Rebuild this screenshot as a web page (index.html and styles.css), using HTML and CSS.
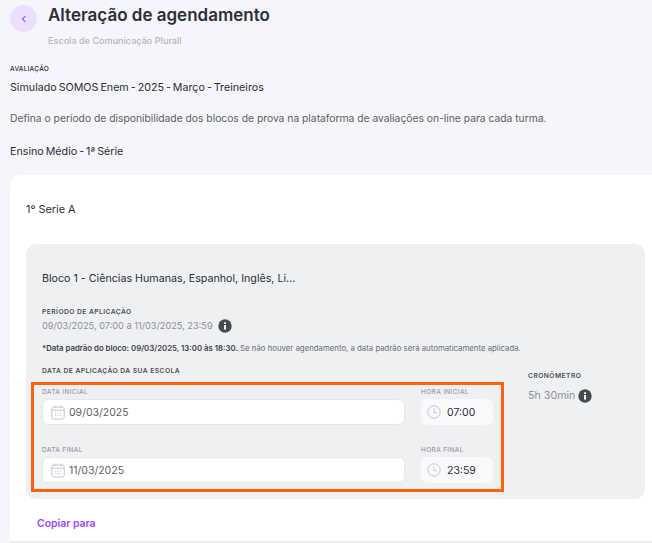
FILE: index.html
```html
<!DOCTYPE html>
<html lang="pt">
<head>
<meta charset="utf-8">
<title>Alteração de agendamento</title>
<link rel="stylesheet" href="styles.css">
</head>
<body>
<header class="top">
  <button class="back" aria-label="Voltar">
    <svg width="6" height="8" viewBox="0 0 6 8"><path d="M4.3 1 1.6 4l2.7 3" fill="none" stroke="#8b3ffc" stroke-width="1.1"/></svg>
  </button>
  <div>
    <h1 class="title">Alteração de agendamento</h1>
    <p class="school">Escola de Comunicação Plurall</p>
  </div>
</header>
<section class="intro">
  <div class="overline">AVALIAÇÃO</div>
  <div class="exam">Simulado SOMOS Enem - 2025 - Março - Treineiros</div>
  <p class="desc">Defina o período de disponibilidade dos blocos de prova na plataforma de avaliações on-line para cada turma.</p>
  <div class="grade">Ensino Médio - 1ª Série</div>
</section>
<main class="card">
  <div class="klass">1º Serie A</div>
  <section class="block">
    <h2 class="block-title">Bloco 1 - Ciências Humanas, Espanhol, Inglês, Li...</h2>
    <div class="overline dark">PERÍODO DE APLICAÇÃO</div>
    <div class="period">09/03/2025, 07:00 a 11/03/2025, 23:59
      <svg class="info" width="14" height="14" viewBox="0 0 14 14"><circle cx="7" cy="7" r="6.7" fill="#454a54"/><rect x="6.1" y="6" width="1.9" height="4.6" fill="#fff"/><rect x="6.1" y="3.3" width="1.9" height="1.7" fill="#fff"/></svg>
    </div>
    <p class="note"><b>*Data padrão do bloco: 09/03/2025, 13:00 às 18:30.</b> Se não houver agendamento, a data padrão será automaticamente aplicada.</p>
    <div class="columns">
      <div class="school-dates">
        <div class="overline dark">DATA DE APLICAÇÃO DA SUA ESCOLA</div>
        <div class="fields">
          <div class="highlight"></div>
          <div class="field">
            <label class="label">DATA INICIAL</label>
            <div class="input date">
              <svg class="cal" width="14" height="15" viewBox="0 0 14 15"><g fill="none" stroke="#c3c6d0"><rect x=".8" y="2" width="12.4" height="12" rx="2"/><path d="M.8 5.2h12.4M3.8.5v2.6M10.2.5v2.6"/><path d="M4 8.2h1.2M6.4 8.2h1.2M8.8 8.2H10M4 10.6h1.2M6.4 10.6h1.2M8.8 10.6H10"/></g></svg>
              09/03/2025
            </div>
          </div>
          <div class="field">
            <label class="label">HORA INICIAL</label>
            <div class="input time">
              <svg class="clock" width="14" height="14" viewBox="0 0 14 14"><g fill="none" stroke="#c3c6d0"><circle cx="7" cy="7" r="6.2"/><path d="M7 3.4V7.6h3.2"/></g></svg>
              07:00
            </div>
          </div>
          <div class="field">
            <label class="label">DATA FINAL</label>
            <div class="input date">
              <svg class="cal" width="14" height="15" viewBox="0 0 14 15"><g fill="none" stroke="#c3c6d0"><rect x=".8" y="2" width="12.4" height="12" rx="2"/><path d="M.8 5.2h12.4M3.8.5v2.6M10.2.5v2.6"/><path d="M4 8.2h1.2M6.4 8.2h1.2M8.8 8.2H10M4 10.6h1.2M6.4 10.6h1.2M8.8 10.6H10"/></g></svg>
              11/03/2025
            </div>
          </div>
          <div class="field">
            <label class="label">HORA FINAL</label>
            <div class="input time">
              <svg class="clock" width="14" height="14" viewBox="0 0 14 14"><g fill="none" stroke="#c3c6d0"><circle cx="7" cy="7" r="6.2"/><path d="M7 3.4V7.6h3.2"/></g></svg>
              23:59
            </div>
          </div>
        </div>
      </div>
      <aside class="timer">
        <div class="overline dark">CRONÔMETRO</div>
        <div class="duration">5h 30min
          <svg class="info" width="14" height="14" viewBox="0 0 14 14"><circle cx="7" cy="7" r="6.7" fill="#454a54"/><rect x="6.1" y="6" width="1.9" height="4.6" fill="#fff"/><rect x="6.1" y="3.3" width="1.9" height="1.7" fill="#fff"/></svg>
        </div>
      </aside>
    </div>
  </section>
  <a class="copy" href="#">Copiar para</a>
</main>
</body>
</html>
```
FILE: styles.css
```css
* { box-sizing: border-box; }
html, body { height: 100%; }
body {
  margin: 0;
  background: #f5f5fb;
  font-family: "Inter", "Noto Sans", sans-serif;
  color: #2b2f38;
  overflow: hidden;
}
.top { display: flex; gap: 11px; padding: 5px 10px 0; height: 65px; }
.back {
  width: 27px; height: 27px; margin-top: 0; border: 0; border-radius: 50%;
  background: #ecdffd; display: flex; align-items: center; justify-content: center; padding: 0;
}
.title { margin: 0; font-size: 17px; line-height: 20px; font-weight: 600; color: #2b2f38; }
.school { margin: 10px 0 0; font-size: 9.1px; line-height: 11px; font-weight: 500; color: #b3b6c4; }
.intro { padding: 0 10px; }
.overline { font-size: 6.6px; line-height: 9px; font-weight: 500; letter-spacing: .2px; color: #2b2f38; }
.overline.dark { font-size: 6.7px; color: #4a4e58; letter-spacing: .45px; font-weight: 600; }
.exam { margin-top: 6px; font-size: 10.7px; line-height: 15px; word-spacing: -1px; color: #2b2f38; }
.desc { margin: 16px 0 0; font-size: 10.3px; line-height: 15px; color: #5b5f69; white-space: nowrap; }
.grade { margin-top: 18px; font-size: 10.7px; line-height: 15px; word-spacing: -1px; color: #2b2f38; }
.card {
  margin: 16px 0 0 10px;
  height: 368px;
  background: #fff;
  border-radius: 10px 0 0 0;
  border-bottom: 2px solid #ececf0;
  padding: 27px 7px 0 16px;
}
.klass { font-size: 10.9px; line-height: 15px; color: #2b2f38; }
.block {
  margin-top: 27px;
  height: 255px;
  background: #eff0f2;
  border-radius: 10px;
  padding: 27px 0 0 16px;
}
.block-title { margin: 0; font-size: 10.7px; line-height: 15px; font-weight: 400; color: #2b2f38; }
.block-title + .overline { margin-top: 22px; }
.period { margin-top: 1px; display: flex; align-items: center; gap: 5px; font-size: 9.2px; line-height: 15px; color: #8c8f98; }
.note { margin: 9px 0 0; font-size: 7.8px; line-height: 12px; color: #6a6e78; white-space: nowrap; }
.note b { font-weight: 600; color: #3c404a; }
.columns { display: flex; margin-top: 13px; }
.school-dates { width: 451px; }
.fields {
  position: relative;
  display: grid;
  grid-template-columns: 363px 72px;
  column-gap: 16px;
  row-gap: 21px;
  margin-top: 12px;
}
.highlight {
  position: absolute;
  left: -11px; top: -6px;
  width: 473px; height: 110px;
  border: 3.5px solid #ff5f0f;
  pointer-events: none;
}
.label { display: block; font-size: 6.6px; line-height: 9px; font-weight: 500; letter-spacing: .3px; color: #989ba5; }
.input {
  margin-top: 2px;
  height: 26px;
  display: flex; align-items: center;
  font-size: 10.5px;
  color: #5b5f69;
  border-radius: 6px;
}
.date { background: #fff; border: 1px solid #e6e7ec; padding-left: 8px; gap: 4px; }
.time { background: #f9f9fb; padding-left: 6px; gap: 6px; color: #2b2f38; }
.timer { margin: 5px 0 0 35px; }
.duration { margin-top: 7px; display: flex; align-items: center; gap: 3px; font-size: 10.7px; line-height: 15px; color: #8c8f98; }
.copy { display: block; margin: 18px 0 0 11px; font-size: 10.4px; line-height: 14px; font-weight: 600; color: #9747ff; text-decoration: none; }
```
